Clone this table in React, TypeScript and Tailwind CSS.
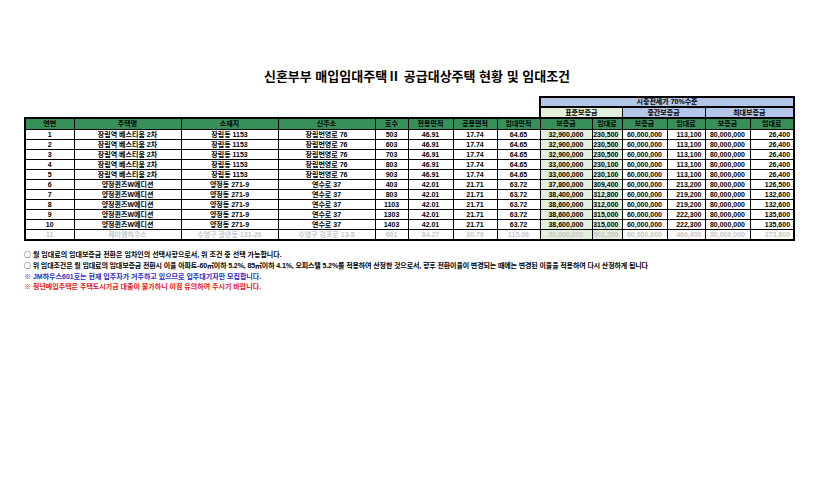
const rows: string[][] = [
  ['1', '장림역 베스티움 2차', '장림동 1153', '장림번영로 76', '503', '46.91', '17.74', '64.65', '32,900,000', '230,500', '60,000,000', '113,100', '80,000,000', '26,400'],
  ['2', '장림역 베스티움 2차', '장림동 1153', '장림번영로 76', '603', '46.91', '17.74', '64.65', '32,900,000', '230,500', '60,000,000', '113,100', '80,000,000', '26,400'],
  ['3', '장림역 베스티움 2차', '장림동 1153', '장림번영로 76', '703', '46.91', '17.74', '64.65', '32,900,000', '230,500', '60,000,000', '113,100', '80,000,000', '26,400'],
  ['4', '장림역 베스티움 2차', '장림동 1153', '장림번영로 76', '803', '46.91', '17.74', '64.65', '33,000,000', '230,100', '60,000,000', '113,100', '80,000,000', '26,400'],
  ['5', '장림역 베스티움 2차', '장림동 1153', '장림번영로 76', '903', '46.91', '17.74', '64.65', '33,000,000', '230,100', '60,000,000', '113,100', '80,000,000', '26,400'],
  ['6', '양정퀸즈W에디션', '양정동 271-9', '연수로 37', '403', '42.01', '21.71', '63.72', '37,800,000', '309,400', '60,000,000', '213,200', '80,000,000', '126,500'],
  ['7', '양정퀸즈W에디션', '양정동 271-9', '연수로 37', '803', '42.01', '21.71', '63.72', '38,400,000', '312,800', '60,000,000', '219,200', '80,000,000', '132,600'],
  ['8', '양정퀸즈W에디션', '양정동 271-9', '연수로 37', '1103', '42.01', '21.71', '63.72', '38,600,000', '312,000', '60,000,000', '219,200', '80,000,000', '132,600'],
  ['9', '양정퀸즈W에디션', '양정동 271-9', '연수로 37', '1303', '42.01', '21.71', '63.72', '38,600,000', '315,000', '60,000,000', '222,300', '80,000,000', '135,600'],
  ['10', '양정퀸즈W에디션', '양정동 271-9', '연수로 37', '1403', '42.01', '21.71', '63.72', '38,600,000', '315,000', '60,000,000', '222,300', '80,000,000', '135,600'],
  ['11', '제이엠하우스', '수영구 광안동 131-26', '수영구 감포로 13-5', '601', '84.27', '30.79', '115.06', '50,600,000', '501,200', '60,000,000', '460,400', '80,000,000', '373,800'],
];

const headers = ['연번', '주택명', '소재지', '신주소', '호수', '전용면적', '공용면적', '임대면적', '보증금', '임대료', '보증금', '임대료', '보증금', '임대료'];

const widths = ['w-[49px]', 'w-[107px]', 'w-[97px]', 'w-[97px]', 'w-[33px]', 'w-[45px]', 'w-[44px]', 'w-[43px]', 'w-[52px]', 'w-[30px]', 'w-[45px]', 'w-[38px]', 'w-[45px]', 'w-[44px]'];

// 임대료 칸은 오른쪽 정렬
const rightCols = [9, 11, 13];

export default function App() {
  return (
    <div className="min-h-screen w-[834px] bg-white font-['Liberation_Sans','Noto_Sans_CJK_KR',sans-serif] text-black">
      {/* 제목 */}
      <h1 className="pt-[69px] text-center text-[13px] font-bold leading-[16px]">
        신혼부부 매입임대주택Ⅱ 공급대상주택 현황 및 임대조건
      </h1>

      <div className="mt-[11px] pl-[24px]">
        <table className="w-[769px] table-fixed border-collapse text-[7px] font-bold">
          <colgroup>
            {widths.map((w, i) => (
              <col key={i} className={w} />
            ))}
          </colgroup>
          <thead>
            <tr className="h-[10px]">
              <td colSpan={8} className="border-0 p-0" />
              <th colSpan={6} className="border-2 border-black bg-[#b4c6e7] p-0 leading-[8px]">
                시중전세가 70%수준
              </th>
            </tr>
            <tr className="h-[11px]">
              <td colSpan={8} className="border-0 p-0" />
              <th colSpan={2} className="border border-l-2 border-black bg-[#e2efda] p-0 leading-[9px]">
                표준보증금
              </th>
              <th colSpan={2} className="border border-black bg-[#b4c6e7] p-0 leading-[9px]">
                중간보증금
              </th>
              <th colSpan={2} className="border border-r-2 border-black bg-[#b4c6e7] p-0 leading-[9px]">
                최대보증금
              </th>
            </tr>
            <tr className="h-[11px]">
              {headers.map((h, i) => (
                <th
                  key={i}
                  className={`border border-t-2 border-black bg-[#37905a] p-0 leading-[9px] ${i === 0 ? 'border-l-2' : ''} ${i === 13 ? 'border-r-2' : ''}`}
                >
                  {h}
                </th>
              ))}
            </tr>
          </thead>
          <tbody>
            {rows.map((r, ri) => {
              const last = ri === rows.length - 1;
              return (
                <tr key={ri} className="h-[10px]">
                  {r.map((c, ci) => (
                    <td
                      key={ci}
                      className={`border border-black p-0 leading-[9px] whitespace-nowrap ${rightCols.includes(ci) ? 'pr-[3px] text-right' : 'text-center'} ${ci === 8 || ci === 9 ? 'bg-[#e2efda]' : ''} ${ci === 0 ? 'border-l-2' : ''} ${ci === 13 ? 'border-r-2' : ''} ${last ? 'border-b-2 text-[#c8c8c8]' : ''}`}
                    >
                      {c}
                    </td>
                  ))}
                </tr>
              );
            })}
          </tbody>
        </table>

        {/* 안내 문구 */}
        <div className="mt-[8px] text-[7px] font-bold leading-[10.5px]">
          <p>
            <span className="font-['Noto_Sans_CJK_KR',sans-serif]">○</span> 월 임대료의 임대보증금 전환은 임차인의 선택사항으로서, 위 조건 중 선택 가능합니다.
          </p>
          <p className="tracking-[-0.12px] whitespace-nowrap">
            <span className="font-['Noto_Sans_CJK_KR',sans-serif]">○</span> 위 임대조건은 월 임대료의 임대보증금 전환시 이율 아파트-60㎡이하 5.2%, 85㎡이하 4.1%, 오피스텔 5.2%를 적용하여 산정한 것으로서, 향후 전환이율이 변경되는 때에는 변경된 이율을 적용하여 다시 산정하게 됩니다
          </p>
          <p className="text-[#2a2ac0]">※ JM하우스601호는 현재 입주자가 거주하고 있으므로 입주대기자만 모집합니다.</p>
          <p className="text-[#e81818]">※ 청년매입주택은 주택도시기금 대출이 불가하니 이점 유의하여 주시기 바랍니다.</p>
        </div>
      </div>
    </div>
  );
}
